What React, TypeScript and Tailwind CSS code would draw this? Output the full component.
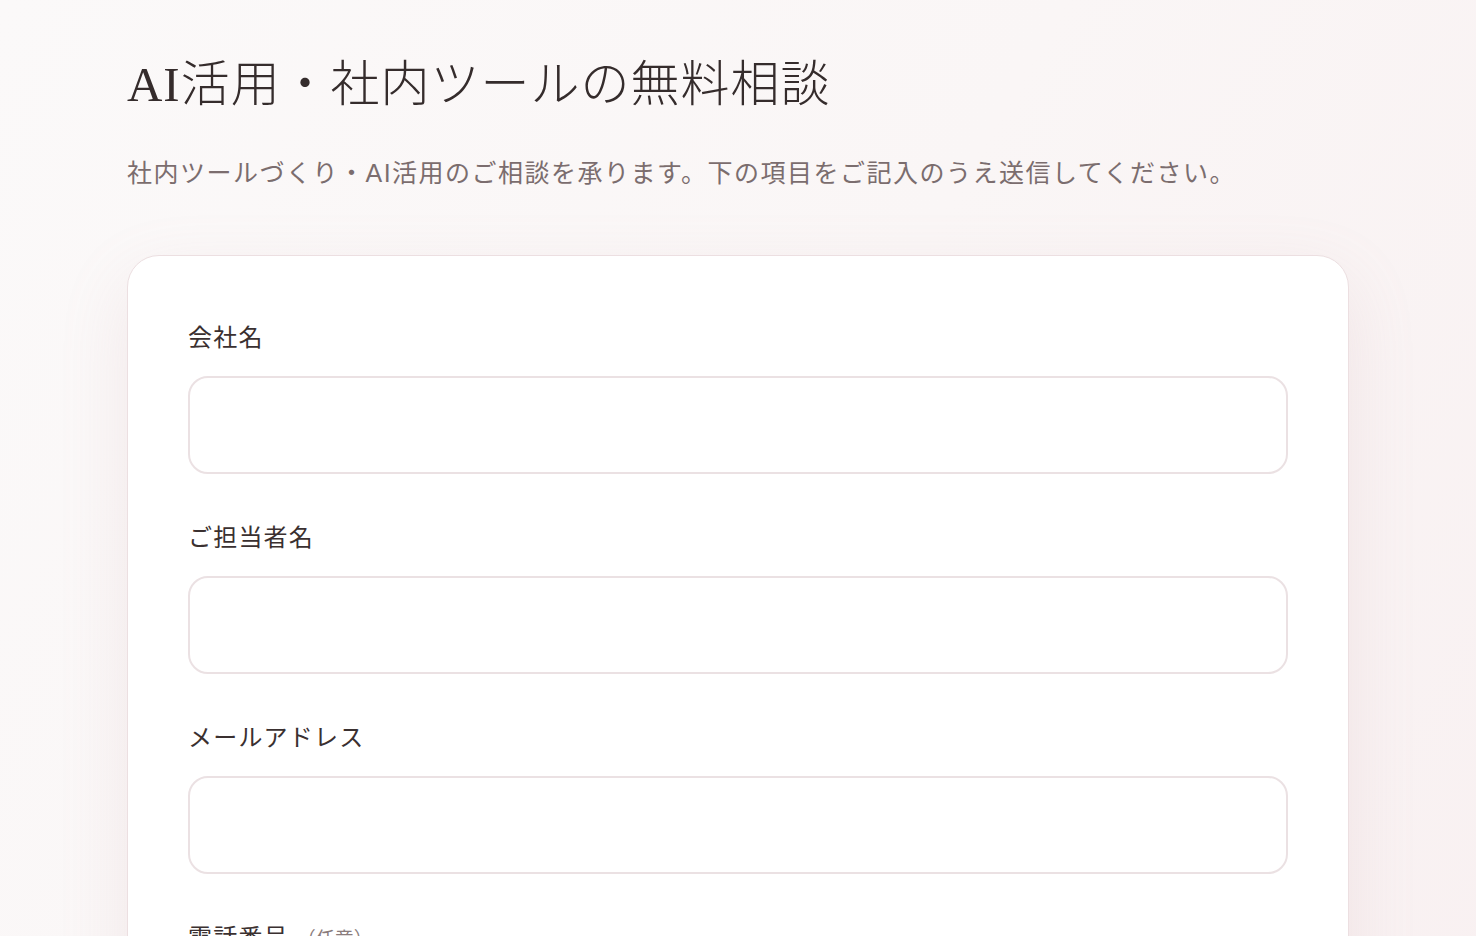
import React from 'react';

const sans = "font-['Liberation_Sans','Noto_Sans_CJK_JP',sans-serif]";

interface FieldProps {
  label: string;
  optional?: boolean;
  type?: string;
}

function Field({ label, optional, type = 'text' }: FieldProps) {
  return (
    <div className="flex flex-col">
      <label className="mb-5 flex items-baseline text-[24px] leading-9 tracking-[0.05em] text-[#3a3030]">
        {label}
        {optional && (
          <span className="ml-2 text-[19px] tracking-normal text-[#8a7c7c]">（任意）</span>
        )}
      </label>
      <input
        type={type}
        className="h-[98px] w-full rounded-[20px] border-2 border-[#ebe1e3] bg-white px-6 text-[22px] text-[#3a3030] outline-none focus:border-[#d9b9bf]"
      />
    </div>
  );
}

export default function App() {
  return (
    <div className={`min-h-[936px] w-full bg-[linear-gradient(120deg,#fbf9f9_0%,#faf6f6_45%,#f8eff0_100%)] ${sans}`}>
      <div className="mx-auto w-[1222px] pt-[56px]">
        {/* Encabezado */}
        <h1 className="font-['Liberation_Serif','Noto_Sans_CJK_JP',serif] text-[49px] font-light leading-[1.2] tracking-[0.02em] text-[#352c2c]">
          AI活用・社内ツールの無料相談
        </h1>
        <p className="mt-[38px] text-[25px] leading-10 tracking-[0.06em] text-[#7b6d6e]">
          社内ツールづくり・AI活用のご相談を承ります。下の項目をご記入のうえ送信してください。
        </p>

        {/* Formulario */}
        <form
          onSubmit={(e) => e.preventDefault()}
          className="mt-[62px] flex flex-col gap-[46px] rounded-[32px] border border-[#ecdfe1] bg-white px-[60px] pb-16 pt-16 shadow-[0_24px_70px_rgba(190,140,150,0.14)]"
        >
          <Field label="会社名" />
          <Field label="ご担当者名" />
          <Field label="メールアドレス" type="email" />
          <Field label="電話番号" optional type="tel" />
          <div className="flex flex-col">
            <label className="mb-5 text-[24px] leading-9 tracking-[0.05em] text-[#3a3030]">ご相談内容</label>
            <textarea
              rows={5}
              className="w-full rounded-[20px] border-2 border-[#ebe1e3] bg-white px-6 py-4 text-[22px] outline-none"
            />
          </div>
        </form>
        <div className="h-24" />
      </div>
    </div>
  );
}
